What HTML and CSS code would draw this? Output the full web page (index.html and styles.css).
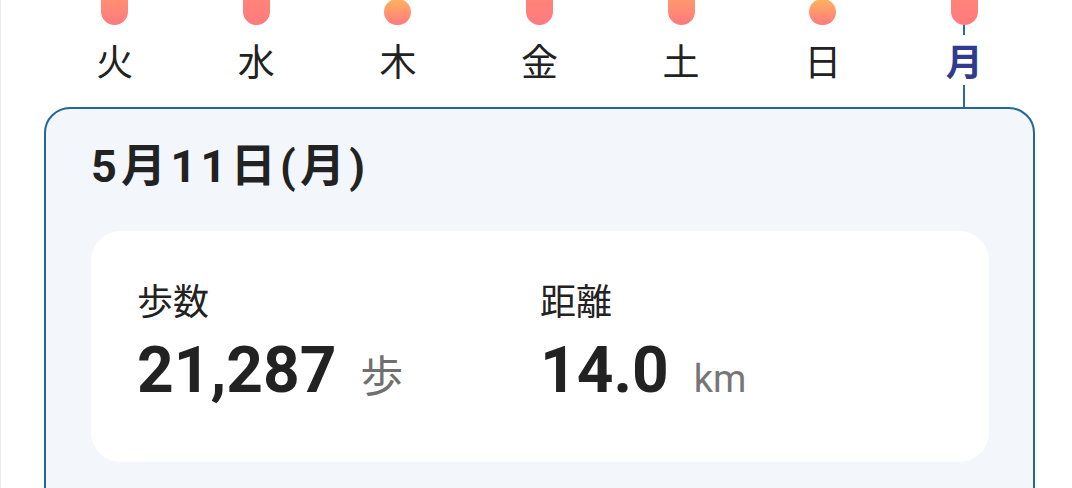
FILE: index.html
```html
<!DOCTYPE html>
<html lang="ja">
<head>
    <meta charset="UTF-8">
    <meta name="viewport" content="width=device-width, initial-scale=1.0">
    <title>歩数</title>
    <link rel="stylesheet" href="styles.css">
</head>
<body>
    <div class="page">
        <div class="bars">
            <div class="col"><div class="bar" style="height: 70px"></div></div>
            <div class="col"><div class="bar" style="height: 140px"></div></div>
            <div class="col"><div class="bar" style="height: 26px"></div></div>
            <div class="col"><div class="bar" style="height: 150px"></div></div>
            <div class="col"><div class="bar" style="height: 50px"></div></div>
            <div class="col"><div class="bar" style="height: 26px"></div></div>
            <div class="col"><div class="bar" style="height: 160px"></div></div>
        </div>
        <div class="days">
            <div class="day"><span>火</span></div>
            <div class="day"><span>水</span></div>
            <div class="day"><span>木</span></div>
            <div class="day"><span>金</span></div>
            <div class="day"><span>土</span></div>
            <div class="day"><span>日</span></div>
            <div class="day active"><span>月</span></div>
        </div>
        <div class="card">
            <h2 class="card-title">5月11日(月)</h2>
            <div class="stats">
                <div class="stat">
                    <div class="stat-label">歩数</div>
                    <div class="stat-value">21,287<span class="unit">歩</span></div>
                </div>
                <div class="stat">
                    <div class="stat-label">距離</div>
                    <div class="stat-value">14.0<span class="unit unit-latin">km</span></div>
                </div>
            </div>
        </div>
    </div>
</body>
</html>
```

FILE: styles.css
```css
body {
    margin: 0;
    background-color: #ffffff;
    color: #222222;
    font-family: Roboto, "Noto Sans CJK JP", sans-serif;
    border-left: 1px solid #ececec;
    height: 488px;
    overflow: hidden;
}
.page {
    padding: 0 37px 0 43px;
}
.bars {
    display: grid;
    grid-template-columns: repeat(7, 1fr);
    height: 25px;
    align-items: end;
}
.col {
    display: flex;
    justify-content: center;
    align-items: flex-end;
    height: 25px;
}
.bar {
    width: 27px;
    flex-shrink: 0;
    border-radius: 14px;
    background: linear-gradient(#ffb35e, #ff7a7e);
}
.days {
    display: grid;
    grid-template-columns: repeat(7, 1fr);
    padding-top: 10px;
    margin-bottom: 22px;
}
.day {
    display: flex;
    justify-content: center;
    font-size: 37px;
    line-height: 37px;
}
.day span {
    display: block;
    height: 37px;
    padding: 10px 6px 3px;
    background-color: #ffffff;
}
.day.active {
    position: relative;
}
.day.active::before,
.day.active::after {
    content: "";
    position: absolute;
    left: 50%;
    width: 2px;
    margin-left: -1px;
    background-color: #2a6a9a;
}
.day.active::before {
    top: -10px;
    height: 10px;
}
.day.active::after {
    bottom: -22px;
    height: 22px;
}
.day.active span {
    color: #2f3b8e;
    font-weight: bold;
}
.card {
    background-color: #f3f7fc;
    border: 2px solid #21679b;
    border-radius: 26px;
    padding: 32px 44px 60px 45px;
}
.card-title {
    margin: 0 0 38px;
    font-size: 45px;
    line-height: 52px;
    font-weight: bold;
    letter-spacing: 4.3px;
    color: #222222;
}
.stats {
    display: grid;
    grid-template-columns: 1fr 1fr;
    background-color: #ffffff;
    border-radius: 30px;
    padding: 54px 46px 59px;
}
.stat-label {
    font-size: 36px;
    line-height: 36px;
    margin-bottom: 18px;
}
.stat-value {
    font-size: 64px;
    line-height: 64px;
    font-weight: bold;
}
.unit {
    font-family: "Noto Sans CJK JP", sans-serif;
    font-size: 43px;
    line-height: 1;
    font-weight: normal;
    color: #707070;
    margin-left: 24px;
}
.unit-latin {
    font-family: Roboto, sans-serif;
    font-size: 38px;
    color: #767676;
    margin-left: 25px;
}
```
